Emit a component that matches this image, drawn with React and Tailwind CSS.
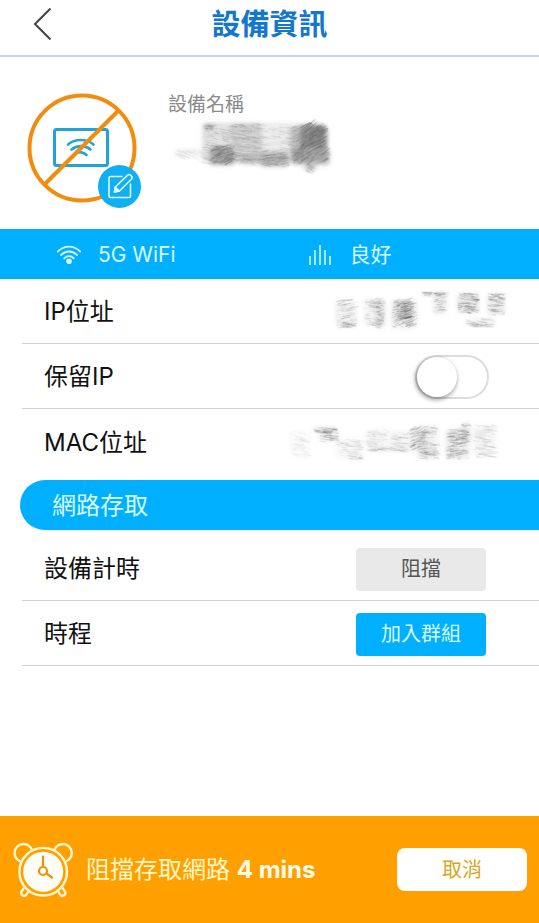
import { useState } from 'react';

const fontStack = "font-[Inter,'Noto_Sans_CJK_TC',sans-serif]";

// [x, y, width, height, darkness, slant]
const namePatches = [
  [34, 2, 60, 40, 0.22, 4],
  [36, 3, 10, 6, 0.5, 4],
  [42, 26, 24, 18, 0.6, -8],
  [62, 2, 74, 38, 0.14, 3],
  [72, 34, 50, 10, 0.2, 3],
  [92, 30, 28, 16, 0.36, -4],
  [122, 6, 38, 36, 0.4, -10],
  [132, 4, 26, 24, 0.75, -12],
  [124, 28, 38, 16, 0.36, -14],
  [136, 42, 12, 8, 0.4, 16],
  [6, 28, 32, 8, 0.1, 8],
];

const ipPatches = [
  [34, 8, 22, 28, 0.24, -4],
  [38, 30, 16, 5, 0.4, 3],
  [62, 6, 22, 28, 0.22, 3],
  [74, 8, 10, 28, 0.4, 3],
  [90, 8, 26, 28, 0.4, -6],
  [94, 10, 18, 18, 0.6, -4],
  [120, 0, 28, 4, 0.5, 1],
  [132, 2, 14, 20, 0.4, -2],
  [156, 1, 22, 20, 0.55, 3],
  [164, 26, 30, 8, 0.25, 3],
  [170, 32, 22, 3, 0.5, 2],
  [186, 1, 18, 22, 0.45, 2],
];

const macPatches = [
  [4, 8, 22, 26, 0.08, 5],
  [28, 4, 24, 5, 0.6, 2],
  [34, 8, 20, 10, 0.45, 2],
  [50, 16, 28, 20, 0.16, 2],
  [62, 32, 16, 4, 0.4, 2],
  [80, 6, 24, 22, 0.16, 2],
  [84, 24, 40, 4, 0.3, 3],
  [104, 8, 20, 20, 0.2, 2],
  [124, 6, 18, 22, 0.5, -8],
  [132, 2, 22, 28, 0.25, 2],
  [132, 28, 22, 8, 0.4, 3],
  [160, 6, 24, 30, 0.42, -2],
  [176, 0, 10, 20, 0.45, 2],
  [188, 2, 24, 32, 0.18, 2],
];

const makeRandom = (seed) => {
  let value = seed;
  return () => {
    value = (value * 16807) % 2147483647;
    return value / 2147483647;
  };
};

const Scribble = ({ patches, seed, soft, width, height, label }) => {
  const random = makeRandom(seed);
  const blurId = `blur-${seed}`;

  return (
    <svg width={width} height={height} viewBox={`0 0 ${width} ${height}`} role="img" aria-label={label} className="shrink-0 overflow-visible">
      <defs>
        <filter id={blurId} x="-30%" y="-30%" width="160%" height="160%">
          <feGaussianBlur stdDeviation="2" />
        </filter>
      </defs>
      {patches.map(([x, y, w, h, dark, slant], i) => (
        <g key={i}>
          <rect x={x} y={y} width={w} height={h} rx="4" fill="#777" opacity={dark * soft} filter={`url(#${blurId})`} />
          {Array.from({ length: Math.round((w * h) / 7) }, (_, n) => {
            const len = 2 + random() * Math.min(w * 0.4, 9);
            const x1 = x + random() * (w - len * 0.8);
            const y1 = y + random() * h;
            return (
              <line
                key={n}
                x1={x1}
                y1={y1}
                x2={x1 + len}
                y2={y1 + (slant / 20) * len * (0.5 + random())}
                stroke="#666"
                strokeWidth={0.5 + random() * 0.8}
                opacity={dark * (0.1 + random() * 0.6)}
              />
            );
          })}
        </g>
      ))}
    </svg>
  );
};

const DeviceIcon = () => (
  <svg width="114" height="115" viewBox="0 0 114 115" fill="none" strokeLinecap="round" aria-hidden="true">
    <rect x="27.5" y="36.5" width="53" height="36" rx="2" stroke="#1fa3dc" strokeWidth="3" />
    <g stroke="#1fa3dc" strokeWidth="2.6">
      <path d="M41 51.5C48 45.5 59.5 45.5 66.5 51.5" />
      <path d="M44.5 56.5C50 52 58 52 63.5 56.5" />
      <path d="M48.5 60.5C52 58.5 56.5 59 59.5 62" />
    </g>
    <circle cx="55" cy="55" r="52.5" stroke="#f28c0f" strokeWidth="4" />
    <path d="M18 91 91 18" stroke="#f28c0f" strokeWidth="4" />
  </svg>
);

const EditIcon = () => (
  <svg width="43" height="43" viewBox="0 0 43 43" fill="none" stroke="#dff8ff" strokeWidth="1.6" strokeLinecap="round" strokeLinejoin="round" aria-hidden="true">
    <path d="M24 11.500H12.500a1.500 1.500 0 0 0-1.500 1.500V31a1.500 1.500 0 0 0 1.500 1.500H31a1.500 1.500 0 0 0 1.500-1.500V19" />
    <path d="M16.500 27l.8-5L29.400 10.300a2.300 2.300 0 0 1 3.200 0l.8.8a2.300 2.300 0 0 1 0 3.200L21.500 26z" />
    <path d="M17.300 22l4 4" />
    <path d="M16.500 27l.6-3.500 3 2.800z" fill="#dff8ff" />
  </svg>
);

const WifiIcon = () => (
  <svg width="26" height="20" viewBox="0 0 26 20" fill="none" stroke="#d9fbff" strokeWidth="1.8" strokeLinecap="round" aria-hidden="true">
    <path d="M1.8 6.5C8.3 0 17.7 0 24.2 6.5" />
    <path d="M5 10C9.7 5.3 16.3 5.3 21 10" />
    <path d="M8.2 13.3C11 10.5 15 10.5 17.8 13.3" />
    <circle cx="13" cy="16.2" r="2.8" fill="#d9fbff" stroke="none" />
  </svg>
);

const SignalIcon = () => (
  <svg width="24" height="20" viewBox="0 0 24 20" stroke="#d9fbff" strokeWidth="1.5" aria-hidden="true">
    <path d="M2 11v9M7 5v15M12 0v20M17 5v15M22 11v9" />
  </svg>
);

const AlarmIcon = () => (
  <svg width="62" height="60" viewBox="0 0 62 60" fill="none" stroke="#fff6d2" strokeWidth="2.4" className="shrink-0" aria-hidden="true">
    <circle cx="11.5" cy="13" r="9" />
    <circle cx="50.8" cy="13" r="9" />
    <g strokeLinecap="round">
      <path d="M15 48.500 12 53M47.500 48.500 50.500 53" strokeWidth="8" />
      <path d="M15 48.500 12 53M47.500 48.500 50.500 53" stroke="#ffa000" strokeWidth="3.2" />
    </g>
    <circle cx="31.2" cy="31.7" r="25.2" fill="#ffa000" stroke="none" />
    <circle cx="31.2" cy="31.7" r="23.8" />
    <circle cx="31.2" cy="31.7" r="20" fill="#fffdf5" stroke="none" />
    <g stroke="#e8950c" strokeWidth="2.2" strokeLinecap="round">
      <path d="M31 16.500V27M34.500 33.500l5.500 4" />
      <circle cx="31" cy="31" r="4" />
    </g>
  </svg>
);

const Row = ({ children, last }) => (
  <div className={`ml-[22px] flex h-[65px] items-center justify-between pt-0.5 pl-[22px] ${last ? '' : 'border-b border-[#d2d2d2]'}`}>
    {children}
  </div>
);

export default function App() {
  const [reserved, setReserved] = useState(false);

  return (
    <div className={`flex min-h-screen flex-col bg-white text-2xl text-[#111] ${fontStack}`}>
      {/* Header */}
      <header className="grid h-[57px] grid-cols-[1fr_auto_1fr] items-center border-b-2 border-[#bfd9e8] pb-2">
        <button type="button" aria-label="返回" className="ml-8 w-5">
          <svg width="20" height="34" viewBox="0 0 20 34" fill="none" stroke="#444" strokeWidth="2" aria-hidden="true">
            <path d="M18.5 1.5 3 17l15.5 15.5" />
          </svg>
        </button>
        <h1 className="pt-0.5 text-[29px] leading-10 font-bold text-[#1377cd]">設備資訊</h1>
      </header>

      {/* Device name */}
      <section className="flex h-[172px] gap-[27px] pt-9 pl-[27px]">
        <div className="relative h-[115px] w-[114px] shrink-0">
          <DeviceIcon />
          <button type="button" aria-label="編輯" className="absolute right-0 bottom-0 size-[43px] rounded-full bg-[#10aff2]">
            <EditIcon />
          </button>
        </div>
        <div>
          <p className="text-[19px] leading-6 text-[#8a8a8a]">設備名稱</p>
          <div className="pt-1">
            <Scribble patches={namePatches} seed={71} soft={0.9} width={176} height={64} label="設備名稱" />
          </div>
        </div>
      </section>

      {/* Connection status */}
      <div className="grid h-[50px] grid-cols-2 items-center bg-[#00b0ff] pt-0.5 text-[21px] text-[#d9fbff]">
        <div className="flex items-center gap-4 pl-14">
          <WifiIcon />
          <span>5G WiFi</span>
        </div>
        <div className="flex items-center gap-[18px] pl-[38px]">
          <SignalIcon />
          <span>良好</span>
        </div>
      </div>

      <Row>
        <span>IP位址</span>
        <div className="pr-8">
          <Scribble patches={ipPatches} seed={23} soft={0.3} width={206} height={40} label="IP位址" />
        </div>
      </Row>
      <Row>
        <label htmlFor="reserve-ip">保留IP</label>
        <input
          id="reserve-ip"
          type="checkbox"
          role="switch"
          checked={reserved}
          onChange={(e) => setReserved(e.target.checked)}
          className="mr-[50px] h-11 w-[74px] cursor-pointer appearance-none rounded-full border-2 border-[#dcdcdc] bg-white before:block before:size-10 before:rounded-full before:bg-white before:shadow-[-1px_2px_4px_1px_rgba(0,0,0,0.35)] checked:bg-[#00b0ff] checked:before:ml-auto"
        />
      </Row>
      <Row last>
        <span>MAC位址</span>
        <div className="pr-10">
          <Scribble patches={macPatches} seed={47} soft={0.3} width={214} height={40} label="MAC位址" />
        </div>
      </Row>

      {/* Network access */}
      <h2 className="my-[6px] ml-5 flex h-[50px] items-center rounded-l-full bg-[#00b0ff] pt-0.5 pl-8 text-[#d9fbff]">網路存取</h2>

      <Row>
        <span>設備計時</span>
        <button type="button" className="mr-[53px] h-[43px] w-[130px] rounded bg-[#e9e9e9] text-xl text-[#555]">
          阻擋
        </button>
      </Row>
      <Row>
        <span>時程</span>
        <button type="button" className="mr-[53px] h-[43px] w-[130px] rounded bg-[#00b0ff] text-xl text-[#d9fbff]">
          加入群組
        </button>
      </Row>

      {/* Block timer */}
      <footer className="mt-auto flex items-center bg-[#ffa000] px-3 py-8">
        <div className="-my-3 shrink-0">
          <AlarmIcon />
        </div>
        <p className="flex-1 pl-3 text-[#fff6c8]">
          阻擋存取網路 <b className="text-[#fffbe8]">4 mins</b>
        </p>
        <button type="button" className="h-[43px] w-[130px] rounded-lg bg-white text-xl text-[#d9a520]">
          取消
        </button>
      </footer>
    </div>
  );
}
